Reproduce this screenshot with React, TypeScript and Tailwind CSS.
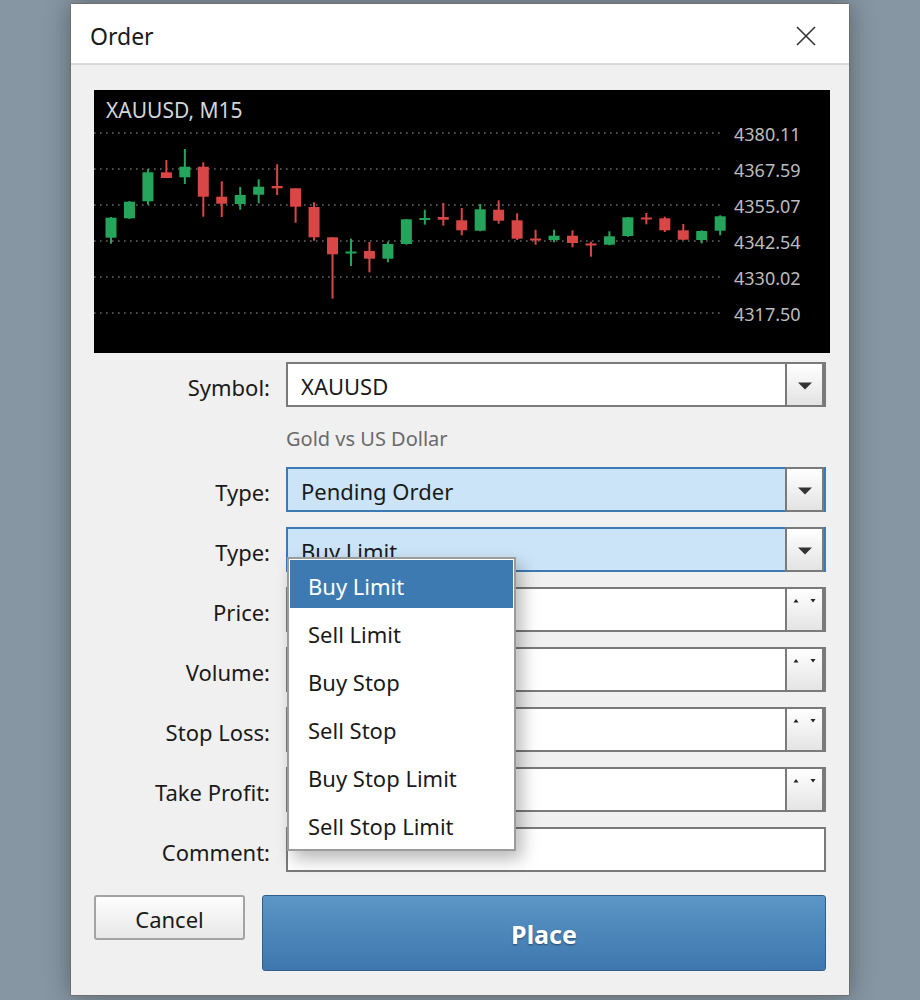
import clsx from 'clsx'

const FONT = { fontFamily: '"Noto Sans", "Open Sans", sans-serif' }

// candles: [bodyTop, bodyBottom, wickTop, wickBottom, up]
const candles: [number, number, number, number, boolean][] = [
  [217.7, 237.7, 217, 243.7, true],
  [201.7, 218.3, 201, 219, true],
  [172.3, 201.3, 169, 204.7, true],
  [172.3, 178, 160, 178, false],
  [166.7, 177.3, 149, 184, true],
  [166.7, 196.7, 162.3, 216.7, false],
  [196.7, 203.7, 181.3, 217, false],
  [195, 204, 187, 209.7, true],
  [186.7, 194.7, 179.3, 203.3, true],
  [186, 188.3, 164.3, 195, false],
  [188.3, 206.7, 188.3, 222.7, false],
  [207, 237.3, 202.3, 240.7, false],
  [237.3, 254.3, 237.3, 298.7, false],
  [251.5, 253.5, 238.7, 266, true],
  [251, 258.7, 242, 272.3, false],
  [244, 258.7, 241.7, 262.3, true],
  [219.3, 244, 219, 244.7, true],
  [218, 219.7, 209.7, 224.7, true],
  [217, 219.7, 203, 225.7, false],
  [220.3, 230.3, 208, 235.3, false],
  [209.3, 230.7, 204, 231.3, true],
  [209.7, 220.7, 200.3, 223.7, false],
  [220.3, 238.7, 213.3, 240, false],
  [238.5, 240.5, 229.7, 244.7, false],
  [235.7, 240, 229.7, 242.3, true],
  [235.7, 243, 230.3, 247.3, false],
  [243.5, 245.5, 241.7, 256.7, false],
  [236.3, 244.7, 231.3, 245.3, true],
  [217.3, 236, 217, 236.7, true],
  [217.5, 219.5, 213, 224.3, false],
  [218.3, 230.3, 216.7, 232, false],
  [230.3, 239.7, 224, 240.3, false],
  [231, 240, 230.3, 243.3, true],
  [216.3, 230.7, 215.3, 235.3, true],
]

const prices = ['4380.11', '4367.59', '4355.07', '4342.54', '4330.02', '4317.50']

function Chart() {
  return (
    <svg width="736" height="263" className="block bg-black">
      {prices.map((p, i) => (
        <line
          key={p}
          x1={0}
          x2={626}
          y1={43 + 36 * i}
          y2={43 + 36 * i}
          stroke="#6a6a6a"
          strokeWidth={1.6}
          strokeDasharray="1.6 4.4"
        />
      ))}
      {candles.map(([bt, bb, wt, wb, up], i) => {
        const cx = 111 + i * 18.46 - 94
        const color = up ? '#25a55b' : '#d94646'
        return (
          <g key={i}>
            <rect x={cx - 1} y={wt - 90} width={2} height={wb - wt} fill={color} />
            <rect x={cx - 5.5} y={bt - 90} width={11} height={Math.max(bb - bt, 2)} fill={color} />
          </g>
        )
      })}
      <text x={12} y={28} fontSize={21} fill="#d2d6da" style={FONT}>
        XAUUSD, M15
      </text>
      {prices.map((p, i) => (
        <text key={p} x={640} y={43 + 36 * i + 7.5} fontSize={18} fill="#bcbcbc" style={FONT}>
          {p}
        </text>
      ))}
    </svg>
  )
}

function Combo({ value, active }: { value: string; active?: boolean }) {
  return (
    <div
      className={clsx(
        'flex h-[45px] border-2',
        active ? 'border-[#3d7ab5] bg-[#cce4f7]' : 'border-[#7a7a7a] bg-white'
      )}
    >
      <div className="flex flex-1 items-center pl-[13px] pt-[4px] text-[22px] text-[#1a1a1a]">{value}</div>
      <div className="-my-[2px] flex w-[39px] items-center justify-center border-2 border-[#7a7a7a] bg-gradient-to-b from-white to-[#e3e3e3] pt-[2px]">
        <svg width="14" height="8">
          <path d="M0 0.5H14L7 7.5Z" fill="#333" />
        </svg>
      </div>
    </div>
  )
}

function Spin() {
  return (
    <div className="flex h-[45px] border-2 border-[#7a7a7a] bg-white">
      <div className="flex-1" />
      <div className="-my-[2px] w-[39px] border-2 border-[#7a7a7a] bg-gradient-to-b from-white to-[#e4e4e4]">
        <svg width="35" height="20" className="block">
          <path d="M6.5 13.5L9 10L11.5 13.5Z" fill="#222" />
          <path d="M23.5 10H28.5L26 13.5Z" fill="#222" />
        </svg>
      </div>
    </div>
  )
}

const options = ['Buy Limit', 'Sell Limit', 'Buy Stop', 'Sell Stop', 'Buy Stop Limit', 'Sell Stop Limit']

function Label({ children }: { children: string }) {
  return <div className="flex items-center justify-end pt-[5px] text-[22px] text-[#1a1a1a]">{children}</div>
}

export default function App() {
  return (
    <div className="h-[1000px] w-[920px] overflow-hidden bg-[#8696a2] pt-[3px]" style={FONT}>
      <div className="ml-[70px] h-[993px] w-[780px] rounded-t-[3px] border border-[#6f6f6f] bg-[#f0f0f0] shadow-[0_0_26px_rgba(0,0,0,0.35)]">
        {/* Title bar */}
        <div className="flex h-[61px] items-center justify-between border-b-2 border-[#d9d9d9] bg-white pl-[19px] pr-[33px] pt-[4px]">
          <span className="pt-[2px] text-[23px] text-[#1a1a1a]">Order</span>
          <svg width="20" height="20">
            <path d="M1 1L19 19M19 1L1 19" stroke="#333" strokeWidth="1.6" />
          </svg>
        </div>

        <div className="pl-[23px] pt-[25px]">
          <Chart />

          <div className="mt-[9px] grid grid-cols-[176px_540px] gap-x-[16px] gap-y-[15px]">
            <Label>Symbol:</Label>
            <Combo value="XAUUSD" />

            <div />
            <div className="flex h-[30px] items-center pt-[3px] text-[20px] text-[#6a6a6a]">Gold vs US Dollar</div>

            <Label>Type:</Label>
            <Combo value="Pending Order" active />

            <Label>Type:</Label>
            <div className="relative">
              <Combo value="Buy Limit" active />
              {/* open list */}
              <div className="absolute left-[1px] top-[30px] z-10 w-[229px] border-2 border-[#9b9b9b] bg-white p-[1px] shadow-[6px_8px_16px_rgba(0,0,0,0.28)]">
                {options.map((o, i) => (
                  <div
                    key={o}
                    className={clsx(
                      'flex h-[48px] items-center pl-[18px] pt-[4px] text-[22px]',
                      i === 0 ? 'bg-[#3e7ab2] text-white' : 'text-[#1a1a1a]'
                    )}
                  >
                    {o}
                  </div>
                ))}
              </div>
            </div>

            <Label>Price:</Label>
            <Spin />

            <Label>Volume:</Label>
            <Spin />

            <Label>Stop Loss:</Label>
            <Spin />

            <Label>Take Profit:</Label>
            <Spin />

            <Label>Comment:</Label>
            <div className="h-[45px] border-2 border-[#7a7a7a] bg-white" />
          </div>

          <div className="mt-[23px] flex w-[732px] items-start gap-[17px]">
            <button className="h-[45px] w-[151px] rounded-[3px] border-2 border-[#a3a3a3] bg-gradient-to-b from-[#fdfdfd] to-[#e8e8e8] pt-[4px] text-[22px] text-[#1a1a1a]">
              Cancel
            </button>
            <button className="h-[76px] flex-1 rounded-[3px] border border-[#2e5f8d] bg-gradient-to-b from-[#5b96c6] to-[#3e77ad] pt-[4px] text-[25px] font-bold text-white [text-shadow:0_1px_2px_rgba(0,0,0,0.45)]">
              Place
            </button>
          </div>
        </div>
      </div>
    </div>
  )
}
